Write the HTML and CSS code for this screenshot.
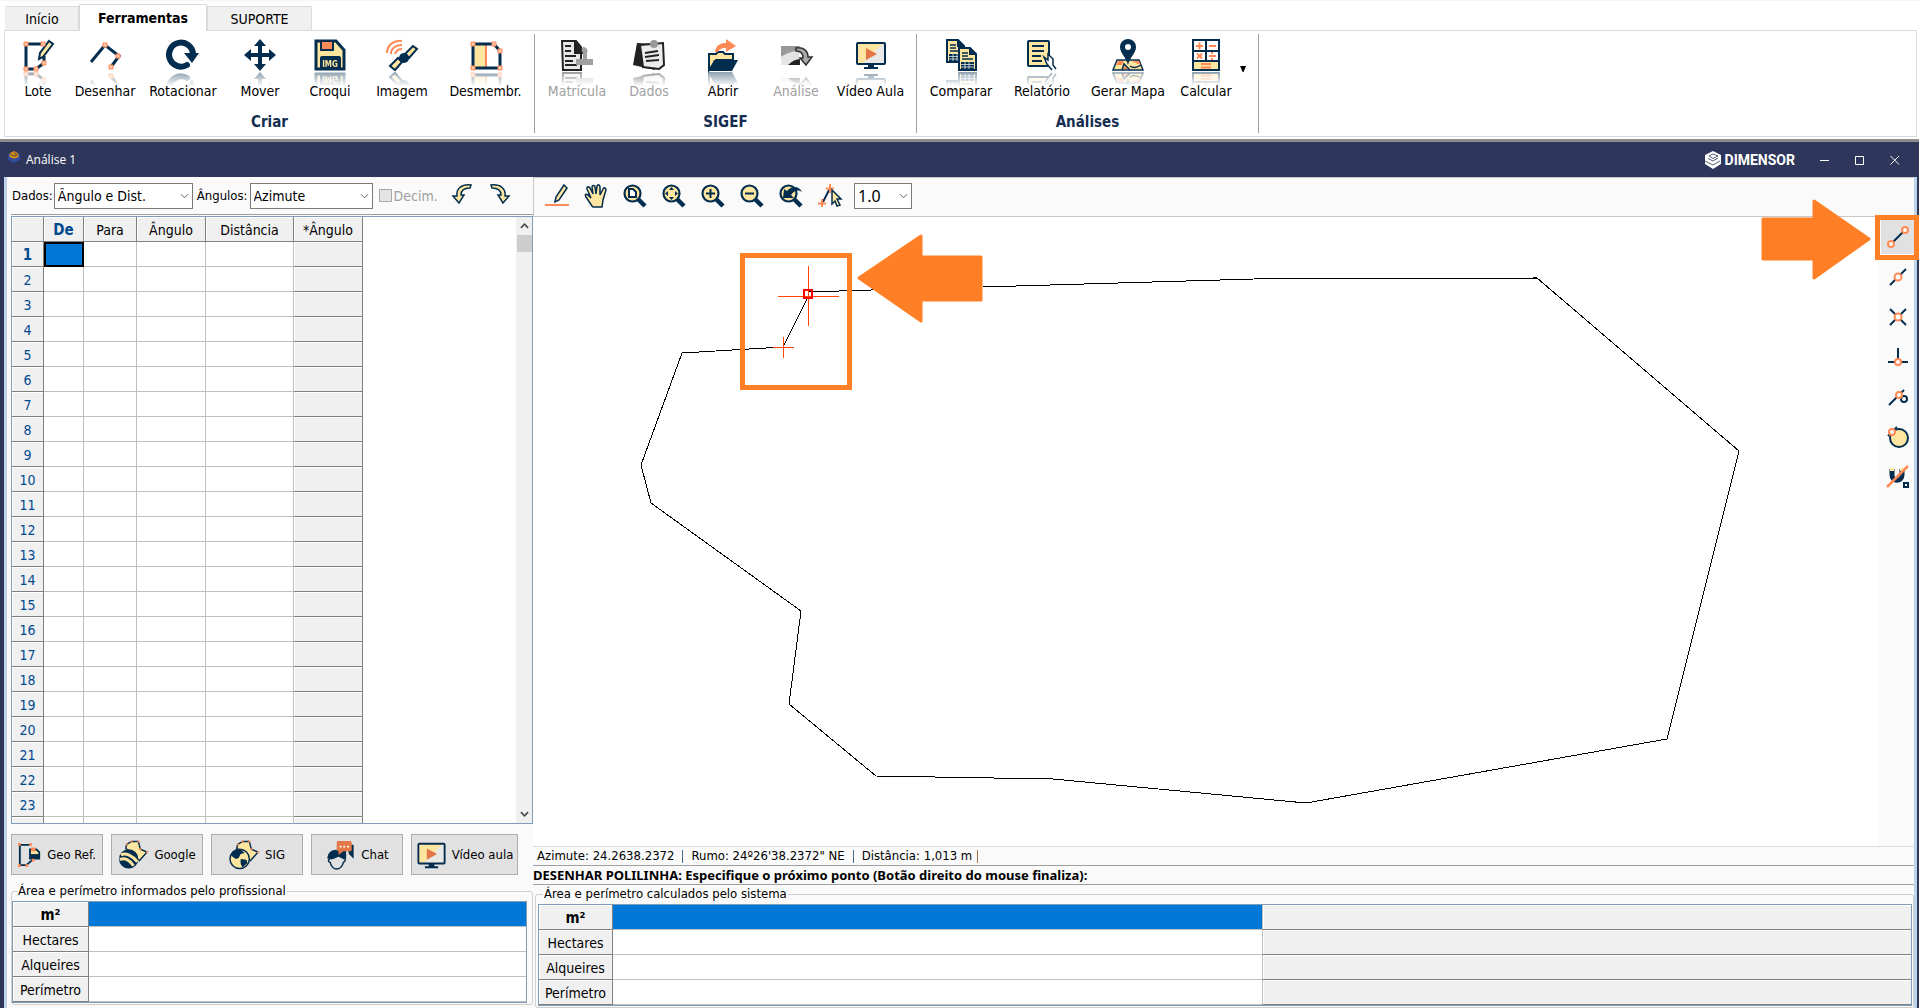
FILE: index.html
```html
<!DOCTYPE html>
<html lang="pt-BR">
<head>
<meta charset="utf-8">
<title>Dimensor - Análise 1</title>
<link rel="stylesheet" href="styles.css">
</head>
<body>
<header class="ribbon">
  <nav class="tabs">
    <button class="tab tab-first" type="button">Início</button>
    <button class="tab active" type="button">Ferramentas</button>
    <button class="tab tab-last" type="button">SUPORTE</button>
  </nav>
  <div class="groups">
    <section class="group">
      <div class="tools tools-criar">
        <button class="tool" type="button"><span class="icon"><svg viewBox="0 0 32 32"><path class="n3" d="M4 5H21M4 5V30H14L22 24V17"/><path class="y n2" d="M27 2L31 5L21 18L17 20L18 14Z"/><g class="pt"><path d="M2 3h4v4H2zM19 3h4v4h-4zM2 28h4v4H2zM12 28h4v4h-4zM20 22h4v4h-4z"/></g></svg></span>Lote</button>
        <button class="tool" type="button"><span class="icon"><svg viewBox="0 0 32 32"><path class="n3" d="M2 23L16 6L30 17L22 28"/><g class="pt"><path d="M14 4h4v4h-4zM27 15h4v4h-4zM20 26h4v4h-4z"/></g></svg></span>Desenhar</button>
        <button class="tool" type="button"><span class="icon"><svg viewBox="0 0 32 32"><path d="M20 26A12 12 0 1 1 26 15" fill="none" stroke="#032d4e" stroke-width="6" stroke-linecap="round"/><path class="n" d="M17 14H32L25 24Z"/></svg></span>Rotacionar</button>
        <button class="tool" type="button"><span class="icon"><svg viewBox="0 0 32 32"><path class="n" d="M16 0L22 7H18V14H25V10L32 16L25 22V18H18V25H22L16 32L10 25H14V18H7V22L0 16L7 10V14H14V7H10Z"/></svg></span>Mover</button>
        <button class="tool" type="button"><span class="icon"><svg viewBox="0 0 32 32"><path class="y n3" d="M2 2H22L30 11V30H2Z"/><path class="o n2o" d="M7 2H19V11H7Z"/><rect class="n" x="6" y="17" width="21" height="14" rx="2"/><text x="16" y="28" text-anchor="middle" class="img-label">IMG</text></svg></span>Croqui</button>
        <button class="tool" type="button"><span class="icon"><svg viewBox="0 0 32 32"><path class="y n2" d="M4 27L9 31L16 23L12 19ZM19 15L23 19L31 10L27 7Z"/><circle class="n" cx="18" cy="19" r="5"/><path class="os" d="M1 14C1 6 8 1 16 2M5 15C5 9 10 6 16 6M9 15C10 12 12 10 16 10"/></svg></span>Imagem</button>
        <button class="tool" type="button"><span class="icon"><svg viewBox="0 0 32 32"><path class="y" d="M4 5H16V29H4Z"/><path class="os" d="M16 5V29"/><path class="n3" d="M3 5H24L30 12V29H3Z"/><g class="pt"><path d="M1 3h4v4H1zM22 3h4v4h-4zM28 10h4v4h-4zM1 27h4v4H1zM28 27h4v4h-4z"/></g></svg></span>Desmembr.</button>
      </div>
      <h2 class="group-name">Criar</h2>
    </section>
    <section class="group">
      <div class="tools tools-sigef">
        <button class="tool" type="button" disabled><span class="icon"><svg viewBox="0 0 32 32"><path d="M1 2H15L20 8V31H2Z" fill="#e8e8e8" stroke="#222" stroke-width="2"/><path d="M13 1L22 10V15L13 15Z" fill="#222"/><path d="M4 7h6M4 12h6M4 17h11M4 22h8M4 26h12" stroke="#222" stroke-width="2"/><path d="M22 8a4 4 0 0 1 4 6V20H32V26H15V20H22V14A4 4 0 0 1 24 7Z" fill="#a0a0a0"/></svg></span>Matrícula</button>
        <button class="tool" type="button" disabled><span class="icon"><svg viewBox="0 0 32 32"><path d="M4 4L22 5V31L0 26Z" fill="#222"/><path d="M7 6L30 4L31 26L26 30L10 28Z" fill="#ececec" stroke="#222" stroke-width="2"/><path d="M12 14L25 12M12 18L26 16M13 22L26 21" stroke="#222" stroke-width="2"/><circle cx="21" cy="5" r="4" fill="#999"/></svg></span>Dados</button>
        <button class="tool" type="button"><span class="icon"><svg viewBox="0 0 32 32"><path class="y n2" d="M2 31V15H9L11 13H16L18 15H26V21H9Z"/><path class="n" d="M2 32L7 21H31L25 32Z"/><path class="o" d="M8 13C9 6 13 4 19 4V0L29 7L19 13V9C15 9 12 10 11 13Z"/></svg></span>Abrir</button>
        <button class="tool" type="button" disabled><span class="icon"><svg viewBox="0 0 32 32"><path d="M1 7H20L17 12L1 18Z" fill="#999"/><path d="M1 18C8 13 14 12 19 12V20L8 26H1Z" fill="#e4e4e4"/><path d="M8 26C12 22 16 20 20 20V26Z" fill="#222"/><path d="M16 9C24 8 28 12 28 18H32L26 26L20 19H23C23 15 21 12 16 12Z" fill="#a8a8a8" stroke="#333" stroke-width="1.5"/></svg></span>Análise</button>
        <button class="tool" type="button"><span class="icon"><svg viewBox="0 0 32 32"><use href="#monitor"/></svg></span>Vídeo Aula</button>
      </div>
      <h2 class="group-name">SIGEF</h2>
    </section>
    <section class="group">
      <div class="tools tools-analises">
        <button class="tool" type="button"><span class="icon"><svg viewBox="0 0 32 32"><g id="sheet"><path class="y n2" d="M2 1H13L19 7V23H2Z"/><path class="n" d="M12 0L20 8H12ZM4 15h13v7H4z"/><path class="n1" d="M5 6h6M5 9h6M5 12h11"/><path d="M4 17.500H17M4 20H17M8 15V22M12 15V22" stroke="#fff" stroke-width=".7"/></g><use href="#sheet" x="12" y="8"/></svg></span>Comparar</button>
        <button class="tool" type="button"><span class="icon"><svg viewBox="0 0 32 32"><rect class="y n2" x="2" y="2" width="21" height="25" rx="1"/><path class="n2" d="M6 7H18M6 12H18M6 17H15M6 22H16"/><path d="M30 30L27 26V20L22 15V21L18 18L21 25L26 31" fill="#fff" stroke="#032d4e" stroke-width="1.500"/></svg></span>Relatório</button>
        <button class="tool" type="button"><span class="icon"><svg viewBox="0 0 32 32"><path class="y n1" d="M5 21H27L31 31H1Z"/><path class="o" d="M6 22H12L10 26H4ZM12 27L18 30H11ZM20 22H27L29 26L24 24Z"/><path class="n1" d="M10 31L12 25L18 31M18 27C22 30 26 28 29 26"/><path class="n" d="M16 26C14 18 8 14 8 8A8 8 0 0 1 24 8C24 14 18 18 16 26Z"/><circle cx="16" cy="8" r="3" fill="#fff"/></svg></span>Gerar Mapa</button>
        <button class="tool" type="button"><span class="icon"><svg viewBox="0 0 32 32"><path d="M3 1H29V31H3Z" fill="#fff"/><path class="y" d="M3 22H29V31H3Z"/><path class="n2" d="M3 1H29V31H3ZM3 12H29M3 22H29M16 1V22"/><path class="os" d="M6 7h7M9.500 3.500v7M19 7h7M7 14.500l5 5M12 14.500l-5 5M19 17h7M11 25h10M11 28.500h10"/><path class="o" d="M21 13h2v2h-2zM21 19h2v2h-2z"/></svg></span>Calcular</button>
        <button class="more" type="button" aria-label="Mais opções"><svg viewBox="0 0 8 7"><path d="M0 0H7L4 7H3Z"/></svg></button>
      </div>
      <h2 class="group-name">Análises</h2>
    </section>
  </div>
</header>

<main class="window">
  <div class="titlebar">
    <svg class="app-icon" viewBox="0 0 16 16"><path d="M8 1L15 5V11L8 15L1 11V5Z" fill="#304a9c"/><path d="M8 1L13 4V8L8 10L3 8V4Z" fill="#d8900e"/><path d="M4 5L8 7L12 5M8 3L11 5" stroke="#2e375b" fill="none"/></svg>
    <h1 class="window-title">Análise 1</h1>
    <svg class="brand-icon" viewBox="0 0 18 18"><path d="M9 0L17 4V13L9 18L1 13V4Z" fill="#fff"/><path d="M1 10L9 14L16 10M5 5L9 3L14 5L9 7.500ZM4 7.500L9 10L14 7" fill="none" stroke="#2e375b" stroke-width=".8"/></svg>
    <span class="brand">DIMENSOR</span>
    <button class="win-btn" type="button" aria-label="Minimizar"><svg viewBox="0 0 10 10"><path d="M0 5.500H9"/></svg></button>
    <button class="win-btn" type="button" aria-label="Maximizar"><svg viewBox="0 0 10 10"><path d="M.5 1.500H8.500V9.500H.5Z"/></svg></button>
    <button class="win-btn" type="button" aria-label="Fechar"><svg viewBox="0 0 10 10"><path d="M.5 1L9 9.500M9 1L.5 9.500"/></svg></button>
  </div>

  <div class="client">
    <section class="side">
      <div class="filters">
        <label for="dados">Dados:</label>
        <span class="combo combo-dados"><select id="dados"><option>Ângulo e Dist.</option></select><svg viewBox="0 0 10 6"><path d="M1 1L5 5L9 1"/></svg></span>
        <label for="angulos">Ângulos:</label>
        <span class="combo combo-ang"><select id="angulos"><option>Azimute</option></select><svg viewBox="0 0 10 6"><path d="M1 1L5 5L9 1"/></svg></span>
        <label class="check"><input type="checkbox" disabled>Decim.</label>
        <button class="hist" type="button" aria-label="Desfazer"><svg viewBox="0 0 20 20"><path class="y n1" d="M19 1C9 0 4 5 5 12H1L7 19L12 11H9C9 6 12 4 18 4Z"/></svg></button>
        <button class="hist" type="button" aria-label="Refazer"><svg viewBox="0 0 20 20"><path class="y n1" d="M1 1C11 0 16 5 15 12H19L13 19L8 11H11C11 6 8 4 2 4Z"/></svg></button>
      </div>

      <div class="grid-box">
        <div class="grid-view">
          <table class="grid">
            <colgroup><col class="c-num"><col class="c-de"><col class="c-para"><col class="c-ang"><col class="c-dist"><col class="c-ang2"></colgroup>
            <thead><tr><th></th><th class="cur">De</th><th>Para</th><th>Ângulo</th><th>Distância</th><th>*Ângulo</th></tr></thead>
            <tbody>
              <tr><th class="cur">1</th><td class="sel"></td><td></td><td></td><td></td><td></td></tr>
              <tr><th>2</th><td></td><td></td><td></td><td></td><td></td></tr>
              <tr><th>3</th><td></td><td></td><td></td><td></td><td></td></tr>
              <tr><th>4</th><td></td><td></td><td></td><td></td><td></td></tr>
              <tr><th>5</th><td></td><td></td><td></td><td></td><td></td></tr>
              <tr><th>6</th><td></td><td></td><td></td><td></td><td></td></tr>
              <tr><th>7</th><td></td><td></td><td></td><td></td><td></td></tr>
              <tr><th>8</th><td></td><td></td><td></td><td></td><td></td></tr>
              <tr><th>9</th><td></td><td></td><td></td><td></td><td></td></tr>
              <tr><th>10</th><td></td><td></td><td></td><td></td><td></td></tr>
              <tr><th>11</th><td></td><td></td><td></td><td></td><td></td></tr>
              <tr><th>12</th><td></td><td></td><td></td><td></td><td></td></tr>
              <tr><th>13</th><td></td><td></td><td></td><td></td><td></td></tr>
              <tr><th>14</th><td></td><td></td><td></td><td></td><td></td></tr>
              <tr><th>15</th><td></td><td></td><td></td><td></td><td></td></tr>
              <tr><th>16</th><td></td><td></td><td></td><td></td><td></td></tr>
              <tr><th>17</th><td></td><td></td><td></td><td></td><td></td></tr>
              <tr><th>18</th><td></td><td></td><td></td><td></td><td></td></tr>
              <tr><th>19</th><td></td><td></td><td></td><td></td><td></td></tr>
              <tr><th>20</th><td></td><td></td><td></td><td></td><td></td></tr>
              <tr><th>21</th><td></td><td></td><td></td><td></td><td></td></tr>
              <tr><th>22</th><td></td><td></td><td></td><td></td><td></td></tr>
              <tr><th>23</th><td></td><td></td><td></td><td></td><td></td></tr>
              <tr><th></th><td></td><td></td><td></td><td></td><td></td></tr>
            </tbody>
          </table>
        </div>
        <div class="scroll">
          <svg viewBox="0 0 10 6"><path d="M1 5L5 1L9 5"/></svg>
          <span class="thumb"></span>
          <svg viewBox="0 0 10 6"><path d="M1 1L5 5L9 1"/></svg>
        </div>
      </div>

      <div class="actions">
        <button class="action" type="button"><svg viewBox="0 0 26 26"><path class="n2" d="M2 2H13M2 2V24H9L16 18"/><path class="y n2" d="M13 7H20L23 10V17H13Z"/><path class="n" d="M14 12h9v5h-9z"/><path class="o" d="M14 5h5v4h-5zM0 0h3v3H0zM12 0h3v3h-3zM0 23h3v3H0zM8 23h3v3H8zM15 17h3v3h-3z"/></svg>Geo Ref.</button>
        <button class="action" type="button"><svg class="wide" viewBox="0 0 32 30"><path class="y n1" d="M9 4L14 1H21L23 9L30 12L22 21L8 8Z"/><circle class="n" cx="11" cy="19" r="10"/><path d="M3 15C8 12 15 16 20 22M2 20C7 17 13 21 16 26" fill="none" stroke="#ffe6a0" stroke-width="3"/><path class="o" d="M8 3h2v2H8zM13 0h2v2h-2zM20 0h2v2h-2zM22 8h2v2h-2zM29 11h2v2h-2z"/></svg>Google</button>
        <button class="action" type="button"><svg class="wide" viewBox="0 0 32 30"><path class="y n1" d="M9 4L14 1H21L23 9L30 12L22 21L8 8Z"/><circle class="y n1" cx="11" cy="19" r="10"/><path class="n" d="M2 15C4 10 9 9 13 10L16 13L12 14L10 18L7 19L4 17ZM12 19L18 20L19 23L14 28L12 24Z"/><path class="o" d="M8 3h2v2H8zM13 0h2v2h-2zM20 0h2v2h-2zM22 8h2v2h-2zM29 11h2v2h-2z"/></svg>SIG</button>
        <button class="action" type="button"><svg class="wide" viewBox="0 0 30 32"><path class="n" d="M1 20C1 12 8 9 14 11H21V20ZM22 5H29V20L24 15Z"/><path d="M4 20C9 20 11 17 13 17L19 20C21 20 20 23 18 24C17 28 14 31 11 31C8 31 5 28 4 24C1 23 2 20 4 20Z" fill="#e1e1e1" stroke="#032d4e" stroke-width="1.500"/><path d="M12 1H25Q27 1 27 3V10Q27 12 25 12H18L13 16V12Q11 12 11 10V3Q11 1 12 1Z" fill="#e27748"/><path d="M14 6h2v2h-2zM18 6h2v2h-2zM22 6h2v2h-2z" fill="#fff"/></svg>Chat</button>
        <button class="action action-video" type="button"><svg class="wide" viewBox="0 0 32 32"><g id="monitor"><rect x="2" y="4" width="28" height="21" rx="1" fill="#e8e8e4"/><path class="y" d="M2 4H28L7 25H2Z"/><rect class="n2" x="2" y="4" width="28" height="21" rx="1"/><path d="M11 9V21L22 15Z" fill="#e27748"/><path class="n" d="M13 25h6v3h4v2H9v-2h4z"/></g></svg>Vídeo aula</button>
      </div>

      <fieldset class="area area-left">
        <legend>Área e perímetro informados pelo profissional</legend>
        <table class="totals">
          <colgroup><col class="c-left"><col></colgroup>
          <tr><th class="unit">m²</th><td class="hot"></td></tr>
          <tr><th>Hectares</th><td></td></tr>
          <tr><th>Alqueires</th><td></td></tr>
          <tr><th>Perímetro</th><td></td></tr>
        </table>
      </fieldset>
    </section>

    <section class="work">
      <div class="canvas-tools">
        <button type="button" aria-label="Desenhar"><svg viewBox="0 0 24 24"><path class="y n1" d="M19 1L22 4L14 16L10 18L11 13Z"/><path d="M0 21H24" stroke="#ff8a55" stroke-width="2"/></svg></button>
        <button type="button" aria-label="Mover tela"><svg viewBox="0 0 24 24"><path class="y n1" d="M8 22L2 13C0 10 3 9 5 12L7 14L3 5C2 3 5 2 6 4L9 10L8 3C8 1 11 1 11 3L12 10L13 2C14 0 16 1 16 3V11L19 5C20 3 22 4 22 6L19 16L18 23H9Z"/></svg></button>
        <button type="button" aria-label="Zoom na página"><svg viewBox="0 0 24 24"><use href="#lens"/><path d="M6 5H10L13 8V13H6Z" fill="#fff" stroke="#032d4e" stroke-width="2"/></svg></button>
        <button type="button" aria-label="Enquadrar"><svg viewBox="0 0 24 24"><use href="#lens"/><path class="n" d="M9.500 3l2.500 3h-5zM9.500 16l2.500-3h-5zM3 9.500l3-2.500v5zM16 9.500l-3-2.500v5z"/></svg></button>
        <button type="button" aria-label="Aproximar"><svg viewBox="0 0 24 24"><g id="lens"><circle cx="9.500" cy="9.500" r="8" fill="#ffe6a0" stroke="#032d4e" stroke-width="2.200"/><path d="M15.500 15.500L22 22" stroke="#032d4e" stroke-width="4.500"/></g><path class="n2" d="M5 9.500H14M9.500 5V14"/></svg></button>
        <button type="button" aria-label="Afastar"><svg viewBox="0 0 24 24"><use href="#lens"/><path class="n2" d="M5 9.500H14"/></svg></button>
        <button type="button" aria-label="Zoom anterior"><svg viewBox="0 0 24 24"><use href="#lens"/><path class="n" d="M4 14L5 5L8 7C13 1 20 2 23 8C18 5 15 7 12 11L15 14Z"/></svg></button>
        <button type="button" aria-label="Selecionar ponto"><svg viewBox="0 0 24 24"><path class="n2" d="M5 18L11 6"/><path d="M12 0V9M8 4.500H16M4 15V23M0 19.500H8" stroke="#ff8a55" stroke-width="2"/><path class="y n1" d="M14 6L23 15H19L22 21L19 22L17 17L14 20Z"/></svg></button>
        <span class="combo combo-zoom"><select aria-label="Escala"><option>1.0</option></select><svg viewBox="0 0 10 6"><path d="M1 1L5 5L9 1"/></svg></span>
      </div>

      <div class="stage">
        <div class="canvas">
          <svg class="drawing" role="img" aria-label="Polígono do lote">
            <g transform="translate(-533 -216)">
              <path class="plot" d="M808 291L871 289L983 286L1254 278L1537 277L1739 450L1667 738L1306 802L1053 778L876 775L789 703L801 610L651 502L641 464L682 352L783 346L808 296"/>
              <path class="cross" d="M808.500 265V325M778 295.500H839M783.500 336V357M773 346.500H794"/>
              <rect x="804" y="289" width="8" height="8" class="node"/>
              <rect x="742.500" y="254.500" width="107" height="132" class="mark"/>
              <path class="arrow" d="M859 277L921 235V256H981V299H921V320Z"/>
            </g>
          </svg>
        </div>
        <aside class="snaps">
          <button class="on" type="button" aria-label="Extremidade"><svg viewBox="0 0 22 22"><path class="n2" d="M5 17L17 5"/><g class="ring"><circle cx="4" cy="18" r="3"/><circle cx="18" cy="4" r="3"/></g></svg></button>
          <button type="button" aria-label="Ponto médio"><svg viewBox="0 0 22 22"><path class="n2" d="M3 19L19 3"/><circle class="ring" cx="11" cy="11" r="3.500"/></svg></button>
          <button type="button" aria-label="Interseção"><svg viewBox="0 0 22 22"><path class="n2" d="M3 3L19 19M3 19L19 3"/><circle class="ring" cx="11" cy="11" r="3.500"/></svg></button>
          <button type="button" aria-label="Perpendicular"><svg viewBox="0 0 22 22"><path class="n2" d="M11 2V15M1 16H21"/><circle class="ring" cx="11" cy="16" r="3"/></svg></button>
          <button type="button" aria-label="Próximo"><svg viewBox="0 0 22 22"><path class="n2" d="M2 19L17 4"/><circle cx="17" cy="13" r="3" class="n2"/><circle class="ring" cx="12" cy="9" r="3"/></svg></button>
          <button type="button" aria-label="Tangente"><svg viewBox="0 0 22 22"><circle class="y n2" cx="12" cy="12" r="9"/><path class="n2" d="M1 10L10 1"/><circle class="ring" cx="5" cy="6" r="3"/></svg></button>
          <button type="button" aria-label="Desligar captura"><svg viewBox="0 0 22 22"><path d="M5 3V9C5 16 15 16 15 9V3" fill="none" stroke="#032d4e" stroke-width="5"/><path class="y" d="M3 2h4v3H3zM13 2h4v3h-4z"/><path class="n2" d="M17 17h4v4h-4z"/><path d="M0 21L21 0" stroke="#ff8a55" stroke-width="2.500"/></svg></button>
        </aside>
        <svg class="callout" viewBox="0 0 157 80"><path class="arrow" d="M1 19H52V1L107 39L52 78V59H1Z"/><rect class="mark" x="115.500" y="17.500" width="39" height="40"/></svg>
      </div>

      <div class="status"><span>Azimute: 24.2638.2372</span><i class="bar"></i><span>Rumo: 24º26'38.2372" NE</span><i class="bar"></i><span>Distância: 1,013 m</span><i class="bar bar-end"></i></div>
      <p class="prompt">DESENHAR POLILINHA: Especifique o próximo ponto (Botão direito do mouse finaliza):</p>

      <fieldset class="area area-right">
        <legend>Área e perímetro calculados pelo sistema</legend>
        <table class="totals">
          <colgroup><col class="c-right"><col><col></colgroup>
          <tr><th class="unit">m²</th><td class="hot"></td><td class="off"></td></tr>
          <tr><th>Hectares</th><td></td><td class="off"></td></tr>
          <tr><th>Alqueires</th><td></td><td class="off"></td></tr>
          <tr><th>Perímetro</th><td></td><td class="off"></td></tr>
        </table>
      </fieldset>
    </section>
  </div>
</main>
</body>
</html>
```
FILE: styles.css
```css
* { box-sizing: border-box; }
html { height: 100%; }
body {
  margin: 0;
  min-height: 100%;
  display: flex;
  flex-direction: column;
  background: #fff;
  color: #000;
  font: 14px/16px "DejaVu Sans Condensed", "DejaVu Sans", Tahoma, sans-serif;
}
button, select, input { font: inherit; color: inherit; margin: 0; }
button { border: 0; padding: 0; background: none; }
svg { display: block; overflow: visible; }

/* icon paint */
.n { fill: #032d4e; }
.n1, .n2, .n3 { fill: none; stroke: #032d4e; stroke-width: 1.5; }
.n2 { stroke-width: 2; }
.n3 { stroke-width: 3; }
.y { fill: #ffe6a0; }
.o { fill: #ff8a55; }
.n2o { stroke: #032d4e; stroke-width: 2; }
.os { fill: none; stroke: #ff8a55; stroke-width: 2; }
.pt { fill: #ffc4a8; stroke: #ff8a55; stroke-width: 1; }
.ring { fill: #fff; stroke: #ff8a55; stroke-width: 2; }
.img-label { font: bold 8px "DejaVu Sans Condensed", sans-serif; fill: #ffe6a0; }

/* ribbon */
.ribbon {
  border-top: 1px solid #f4f4f4;
  border-bottom: 3px solid #8c8c8c;
  padding: 3px 2px 2px 4px;
}
.tabs { display: flex; align-items: flex-end; height: 26px; padding-left: 1px; }
.tab {
  height: 24px;
  background: #f0f0f0;
  border: 1px solid #dadada;
  border-bottom: 0;
}
.tab-first { width: 74px; border-left-color: #f0f0f0; }
.tab-last { width: 105px; }
.tab.active { width: 128px; height: 27px; margin-bottom: -1px; background: #fff; font-weight: bold; position: relative; }
.groups { display: flex; border: 1px solid #dadada; padding: 3px 0 3px; }
.group {
  border-right: 1px solid #a0a0a0;
  height: 99px;
  display: flex;
  flex-direction: column;
  justify-content: space-between;
}
.tools { display: grid; padding-top: 5px; }
.tools-criar { grid-template-columns: 66px 68px 88px 66px 74px 70px 97px; }
.tools-sigef { grid-template-columns: 84px 60px 88px 58px 91px; }
.tools-analises { grid-template-columns: 88px 74px 98px 58px 23px; }
.tool { display: flex; flex-direction: column; align-items: center; gap: 12px; white-space: nowrap; }
.tool:disabled { color: #a0a0a0; }
.icon {
  width: 32px;
  height: 32px;
  -webkit-box-reflect: below 1px linear-gradient(transparent 55%, rgba(0, 0, 0, .45));
}
.icon svg { width: 32px; height: 32px; }
.more { padding: 0 0 0 5px; display: flex; align-items: center; }
.more svg { width: 7px; height: 6px; }
.group-name { margin: 0 0 2px; font-size: 15px; line-height: 18px; text-align: center; color: #142d50; }

/* window frame */
.window { flex: 1; display: flex; flex-direction: column; background: #2e375b; padding: 0 2px 0 4px; }
.titlebar { height: 35px; display: flex; align-items: center; color: #fff; padding: 0 5px 0 3px; }
.app-icon { width: 14px; height: 14px; margin-bottom: 6px; }
.window-title { flex: 1; margin: 0 5px; font: 12px/16px "Open Sans", "Noto Sans", sans-serif; }
.brand-icon { width: 18px; height: 18px; }
.brand { font: bold 14px/16px Roboto, sans-serif; margin: 0 12px 0 3px; }
.win-btn { width: 35px; height: 35px; display: grid; place-items: center; }
.win-btn svg { width: 10px; height: 10px; fill: none; stroke: #fff; }
.client {
  flex: 1;
  display: flex;
  background: #fafafa;
  border: solid #bcd3ea;
  border-width: 0 3px 2px;
}

/* left panel */
.side { width: 526px; display: flex; flex-direction: column; padding-left: 4px; }
.filters {
  height: 38px;
  display: flex;
  align-items: center;
  padding-left: 1px;
  border-bottom: 1px solid #a0a0a0;
  font-size: 13px;
}
.combo { position: relative; font-size: 14px; }
.combo select {
  width: 100%;
  height: 26px;
  appearance: none;
  border: 1px solid #7a7a7a;
  border-radius: 0;
  background: #fff;
  padding: 0 3px;
}
.combo svg { position: absolute; right: 4px; top: 10px; width: 9px; height: 6px; fill: none; stroke: #555; pointer-events: none; }
.combo-dados { width: 139px; margin: 0 4px 0 1px; }
.combo-ang { width: 123px; margin-left: 2px; }
.check { display: flex; align-items: center; gap: 2px; margin-left: 6px; color: #a0a0a0; font-size: 14px; }
.check input { appearance: none; width: 13px; height: 13px; border: 1px solid #a8a8a8; background: #e4e4e4; }
.hist { width: 20px; margin: 0 0 4px 14px; }
.hist + .hist { margin-left: 18px; }
.hist svg { width: 20px; height: 20px; }

.grid-box { flex: 1 0 608px; height: 608px; margin-top: 1px; display: flex; border: 1px solid #7f9db9; background: #fff; overflow: hidden; }
.grid-view { flex: 1; overflow: hidden; }
table { border-collapse: separate; border-spacing: 0; table-layout: fixed; }
th, td { padding: 0; height: 25px; font-weight: normal; text-align: center; border: solid #c0c0c0; border-width: 0 1px 1px 0; }
th { padding-top: 2px; }
th, .off, .grid td:last-child { background: #f0f0f0; border-color: #808080; box-shadow: inset 1px 1px #fff; }
.grid { width: 351px; }
.c-num { width: 32px; }
.c-de { width: 40px; }
.c-para { width: 53px; }
.c-ang { width: 69px; }
.c-dist { width: 88px; }
.c-ang2 { width: 69px; }
.grid tbody th, .grid .cur { color: #004a8f; }
.grid .cur { font-weight: bold; font-size: 15px; }
.grid .sel { background: #0078d7; border: 0; box-shadow: inset 0 0 0 2px #000; }
.scroll { width: 16px; background: #f0f0f0; display: flex; flex-direction: column; align-items: center; padding: 6px 0; }
.scroll svg { width: 9px; height: 6px; fill: none; stroke: #505050; stroke-width: 2; }
.thumb { width: 15px; height: 17px; background: #cdcdcd; margin: 6px 0 auto; }

.actions { display: flex; gap: 8px; padding: 10px 0 9px; }
.action {
  width: 92px;
  height: 41px;
  display: flex;
  align-items: center;
  justify-content: center;
  gap: 5px;
  background: #e1e1e1;
  border: 1px solid #adadad;
  font-size: 13px;
  white-space: nowrap;
}
.action-video { width: 107px; }
.action svg { width: 24px; height: 26px; }
.action .wide { width: 31px; height: 30px; }

.area { margin: 0; min-width: 0; border: 1px solid #cfcfcf; border-radius: 3px; font-size: 13px; }
.area legend { padding: 0 1px; margin-left: 5px; line-height: 14px; }
.area-left { padding: 3px 5px 1px 0; margin-bottom: 3px; }
.totals { width: 100%; border: 1px solid #7f9db9; background: #fff; font-size: 14px; }
.totals td { border-right: 0; }
.totals .unit { font-weight: bold; font-size: 15px; }
.c-left { width: 76px; }
.c-right { width: 74px; }
.hot { background: #0078d7; }
.totals .off { border-left: 1px solid #c0c0c0; }

/* right panel */
.work { flex: 1; min-width: 0; display: flex; flex-direction: column; }
.canvas-tools {
  height: 40px;
  display: flex;
  align-items: center;
  gap: 15px;
  padding: 0 10px 3px 11px;
  border: 1px solid #c8c8c8;
  border-right: 0;
}
.canvas-tools button svg { width: 24px; height: 24px; }
.combo-zoom { width: 58px; margin-left: -3px; }
.combo-zoom select { font: 16px/20px "Noto Sans", sans-serif; }
.stage { flex: 1; display: flex; position: relative; }
.canvas { flex: 1; background: #fff; position: relative; overflow: hidden; }
.drawing { position: absolute; inset: 0; width: 100%; height: 100%; }
.plot { fill: none; stroke: #000; stroke-width: 1; shape-rendering: crispEdges; }
.cross { stroke: #ff4500; }
.node { fill: none; stroke: #f00; stroke-width: 2; }
.mark { fill: none; stroke: #ff7f27; stroke-width: 5; }
.arrow { fill: #ff7f27; stroke: #ff7f27; stroke-width: 3; stroke-linejoin: round; }
.snaps { width: 36px; padding: 3px 0 0 3px; display: flex; flex-direction: column; gap: 6px; }
.snaps button { height: 34px; display: grid; place-items: center; }
.snaps .on { background: #e1e1e1; }
.snaps svg { width: 22px; height: 22px; }
.callout { position: absolute; right: -5px; top: -17px; width: 157px; height: 80px; }

.status {
  height: 20px;
  display: flex;
  align-items: center;
  padding-left: 4px;
  border-top: 1px solid #dcdcdc;
  border-bottom: 1px solid #a0a0a0;
  font-size: 13px;
}
.bar { width: 1px; height: 13px; margin: 0 8px; background: #4a6f92; }
.bar-end { margin-left: 5px; background: #a8703c; }
.prompt { margin: 0; height: 19px; border-bottom: 1px solid #a0a0a0; font: bold 13px/18px "Noto Sans", sans-serif; }
.area-right { padding: 3px 1px 1px 2px; margin: 2px 0 0 2px; }
```
